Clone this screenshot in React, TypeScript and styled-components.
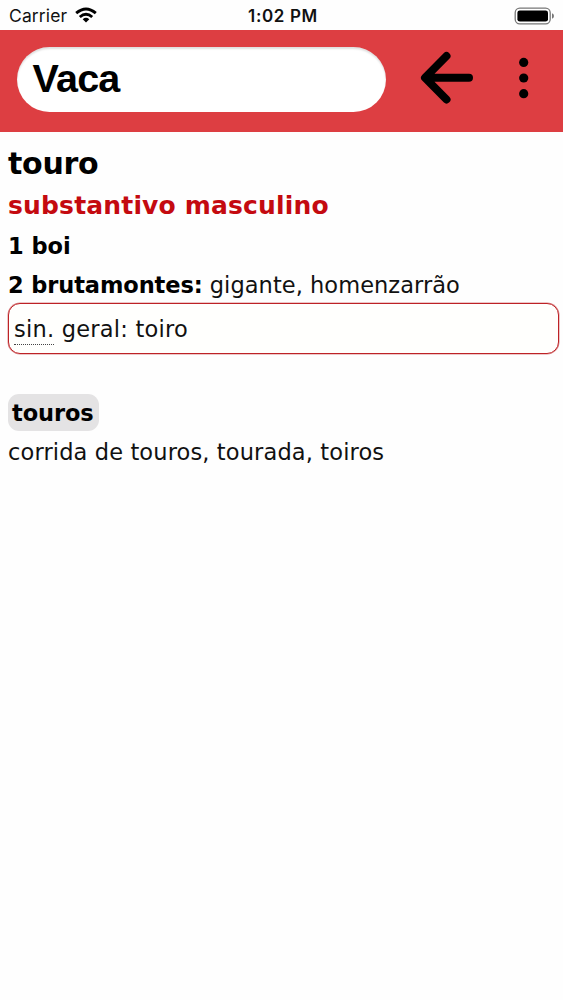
import React from "react";
import styled, { createGlobalStyle } from "styled-components";

const GlobalStyle = createGlobalStyle`
  body { margin: 0; background: #fff; color: #000; }
  * { box-sizing: border-box; }
`;

const Screen = styled.div`
  width: 563px;
  min-height: 1000px;
  background: #fefefe;
  font-family: "DejaVu Sans", Verdana, sans-serif;
`;

const StatusBar = styled.div`
  height: 30px;
  display: grid;
  grid-template-columns: 1fr auto 1fr;
  align-items: center;
  padding: 1px 9px 0 9px;
  font-family: Inter, sans-serif;
  font-size: 17.5px;
  line-height: 28px;
  color: #111;
`;

const Carrier = styled.div`
  display: flex;
  align-items: center;
  gap: 8px;
  letter-spacing: 0.12px;
`;

const Clock = styled.div`
  font-weight: 600;
  font-size: 17px;
  letter-spacing: 0.65px;
  padding-left: 3px;
`;

const Battery = styled.svg`
  justify-self: end;
`;

const Header = styled.header`
  height: 102px;
  background: #dd3e42;
  display: flex;
  padding: 17px 0 0 16.5px;
`;

const SearchField = styled.div`
  width: 369px;
  height: 65px;
  border-radius: 33px;
  background: #fff;
  box-shadow: inset 0 2px 2px rgba(0, 0, 0, 0.13);
  padding-left: 16px;
  font: bold 39.5px/63px "Liberation Sans", Arial, sans-serif;
  letter-spacing: -0.75px;
`;

const Actions = styled.svg`
  margin-left: 34.5px;
`;

const Entry = styled.main`
  padding: 12px 4px 0 8px;
`;

const Line = styled.div<{ $size?: number; $h?: number; $track?: number; $color?: string; $bold?: boolean }>`
  font-size: ${(p) => p.$size ?? 22.5}px;
  height: ${(p) => p.$h ?? 39}px;
  line-height: ${(p) => p.$h ?? 39}px;
  letter-spacing: ${(p) => p.$track ?? 0}px;
  color: ${(p) => p.$color ?? "#111"};
  font-weight: ${(p) => (p.$bold ? 700 : 400)};
  white-space: nowrap;
`;

const Term = styled.b<{ $track?: number }>`
  color: #000;
  letter-spacing: ${(p) => p.$track ?? 0}px;
`;

const Synonyms = styled.div`
  height: 51px;
  margin-top: -2px;
  border: 1.5px solid #bd2226;
  box-shadow: 0 0 0 0.5px rgba(189, 34, 38, 0.5);
  border-radius: 12px;
  background: #fffffd;
  padding: 6px 0 0 5px;
`;

const Abbr = styled.span`
  display: inline-block;
  height: 35px;
  border-bottom: 1px dotted #444;
`;

const Tag = styled.div`
  display: flow-root;
  width: 91px;
  height: 37px;
  margin: 40px 0 2px;
  padding: 0 4px;
  border-radius: 11px;
  background: #e4e3e4;
`;

export default function App() {
  return (
    <>
      <GlobalStyle />
      <Screen>
        <StatusBar>
          <Carrier>
            Carrier
            <svg width="22" height="17" viewBox="0 0 22 17" fill="none" stroke="#000" strokeWidth="2.9">
              <path d="M1.2 6.2Q11 -2.3 20.8 6.2" />
              <path d="M4.8 10Q11 4.6 17.2 10" />
              <path d="M7.7 12.2Q11 9.4 14.3 12.2L11 15.6Z" fill="#000" stroke="none" />
            </svg>
          </Carrier>
          <Clock>1:02 PM</Clock>
          <Battery width="40" height="18" viewBox="0 0 40 18">
            <rect x="1.2" y="1.2" width="35" height="15.6" rx="4.6" fill="#fff" stroke="#777" strokeWidth="1.3" />
            <rect x="3.4" y="3.4" width="30.6" height="11.2" rx="2.4" fill="#000" />
            <path d="M38 6.3Q40 7 40 9T38 11.7Z" fill="#777" />
          </Battery>
        </StatusBar>
        <Header>
          <SearchField>Vaca</SearchField>
          <Actions width="120" height="62" viewBox="420 47 120 62">
            <path d="M446.5 56L425 77.8L446.5 99.5M426 77.8H469" fill="none" stroke="#000" strokeWidth="8" strokeLinecap="round" strokeLinejoin="round" />
            <circle cx="523.7" cy="62.4" r="4.6" />
            <circle cx="523.7" cy="78" r="4.6" />
            <circle cx="523.7" cy="93.7" r="4.6" />
          </Actions>
        </Header>
        <Entry>
          <Line $size={30} $h={40} $track={-0.25} $bold $color="#000">touro</Line>
          <Line $size={25} $h={43} $track={0.17} $bold $color="#c40a10">substantivo masculino</Line>
          <Line $h={38}><Term>1 boi</Term></Line>
          <Line $h={40} $track={0.05}><Term $track={-0.1}>2 brutamontes:</Term> gigante, homenzarrão</Line>
          <Synonyms>
            <Line $track={0.23}><Abbr>sin.</Abbr> geral: toiro</Line>
          </Synonyms>
          <Tag><Line $h={38}><Term $track={-0.1}>touros</Term></Line></Tag>
          <Line $track={0.13}>corrida de touros, tourada, toiros</Line>
        </Entry>
      </Screen>
    </>
  );
}
